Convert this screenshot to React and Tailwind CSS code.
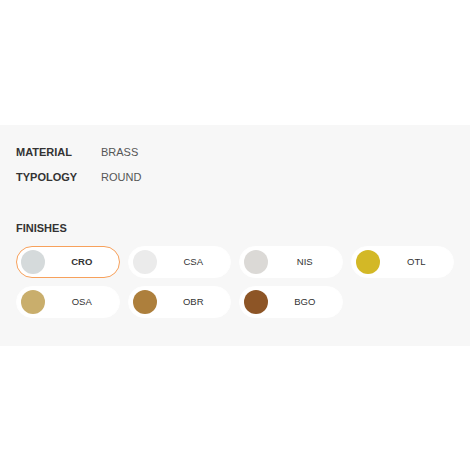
import React from 'react';

const finishes = [
  { code: 'CRO', color: '#d5dadb', selected: true },
  { code: 'CSA', color: '#ebebeb' },
  { code: 'NIS', color: '#dbd9d6' },
  { code: 'OTL', color: '#d3b826' },
  { code: 'OSA', color: '#c9ae6c' },
  { code: 'OBR', color: '#ad7f3c' },
  { code: 'BGO', color: '#8d5526' },
];

const App = () => {
  return (
    <div className="w-[470px] h-[470px] bg-white" style={{ fontFamily: '"Liberation Sans", Arial, sans-serif' }}>
      <div className="h-[125px]" />
      <div className="bg-[#f7f7f7] px-4 pt-[15px] pb-[28px]">
        {/* Specs */}
        <div className="flex items-center h-[25px] text-[11px]">
          <span className="w-[85px] font-bold text-[#333]">MATERIAL</span>
          <span className="text-[#555]">BRASS</span>
        </div>
        <div className="flex items-center h-[25px] text-[11px]">
          <span className="w-[85px] font-bold text-[#333]">TYPOLOGY</span>
          <span className="text-[#555]">ROUND</span>
        </div>

        {/* Finishes */}
        <h3 className="mt-[30px] mb-[10px] text-[11px] leading-4 font-bold text-[#333]">FINISHES</h3>
        <div className="grid grid-cols-4 gap-2">
          {finishes.map((f) => (
            <button
              key={f.code}
              className={`flex items-center h-8 rounded-full bg-white pl-[4px] border ${
                f.selected ? 'border-[#f7a15c]' : 'border-white'
              }`}
            >
              <span className="w-6 h-6 rounded-full shrink-0" style={{ backgroundColor: f.color }} />
              <span className={`flex-1 text-center text-[9.5px] text-[#333] ${f.selected ? 'font-bold' : 'font-normal'}`}>{f.code}</span>
            </button>
          ))}
        </div>
      </div>
    </div>
  );
};

export default App;
